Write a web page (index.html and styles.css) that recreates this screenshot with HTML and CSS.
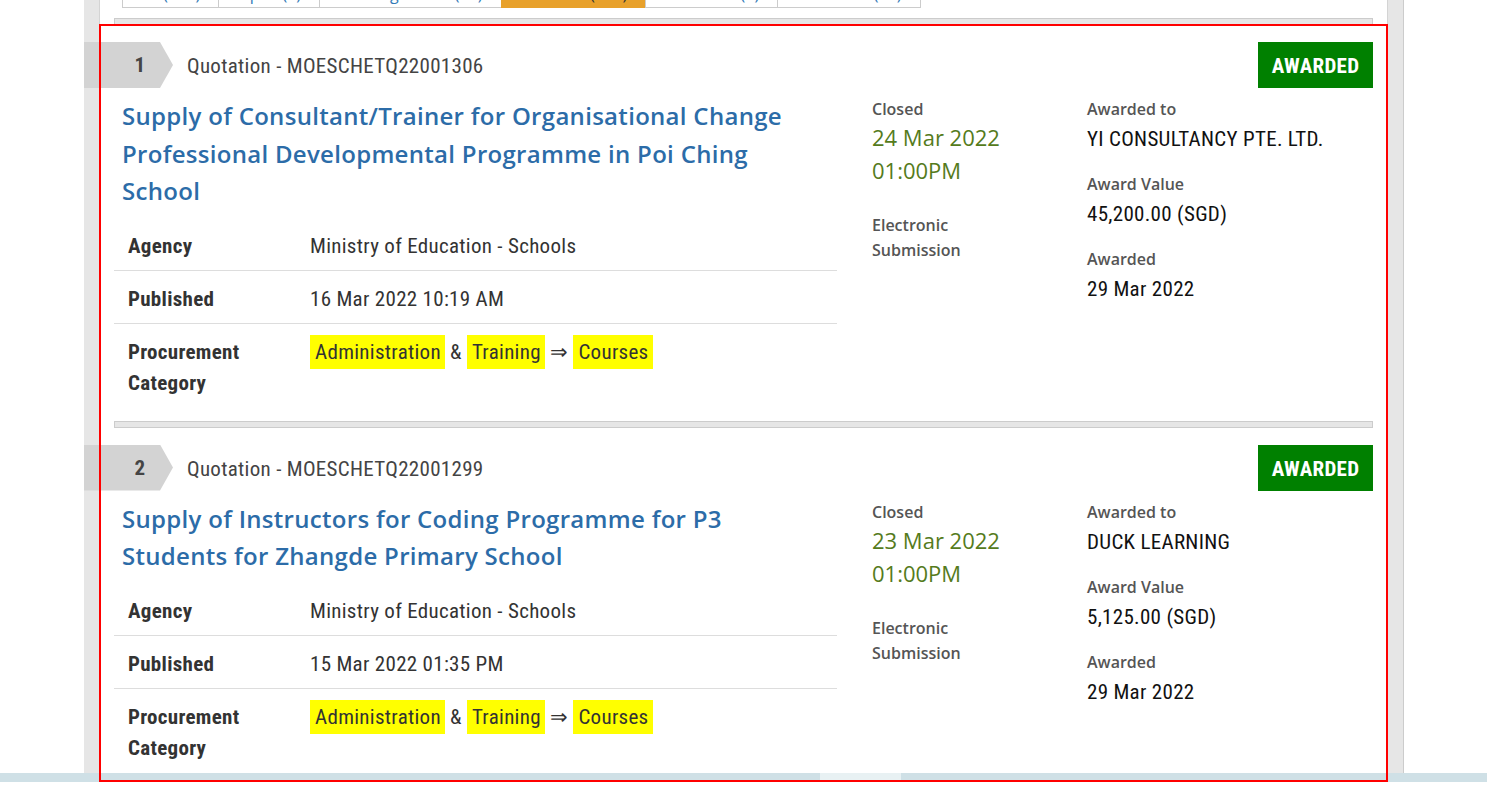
FILE: index.html
```html
<!DOCTYPE html>
<html lang="en">
<head>
<meta charset="utf-8">
<title>Opportunities</title>
<link rel="stylesheet" href="styles.css">
</head>
<body>
<div class="frame">
  <div class="page">
    <div class="panel">
      <ul class="tabs">
        <li class="tab">All (452)</li>
        <li class="tab">Open (7)</li>
        <li class="tab">Pending Award (35)</li>
        <li class="tab tab-active">Awarded (419)</li>
        <li class="tab">Cancelled (5)</li>
        <li class="tab">No Award (26)</li>
      </ul>
      <div class="sep"></div>

      <article class="card">
        <header class="card-head">
          <span class="num">1</span>
          <span class="ref">Quotation - MOESCHETQ22001306</span>
          <span class="status">AWARDED</span>
        </header>
        <div class="card-body">
          <div class="main">
            <a class="title" href="#">Supply of Consultant/Trainer for Organisational Change Professional Developmental Programme in Poi Ching School</a>
            <table class="meta">
              <tr><th>Agency</th><td>Ministry of Education - Schools</td></tr>
              <tr><th>Published</th><td>16 Mar 2022 10:19 AM</td></tr>
              <tr><th>Procurement Category</th><td><span class="hl">Administration</span> &amp; <span class="hl">Training</span> ⇒ <span class="hl">Courses</span></td></tr>
            </table>
          </div>
          <div class="closing">
            <div class="label">Closed</div>
            <div class="date">24 Mar 2022<br>01:00PM</div>
            <div class="mode">Electronic Submission</div>
          </div>
          <div class="award">
            <div class="label">Awarded to</div>
            <div class="value">YI CONSULTANCY PTE. LTD.</div>
            <div class="label">Award Value</div>
            <div class="value">45,200.00 (SGD)</div>
            <div class="label">Awarded</div>
            <div class="value">29 Mar 2022</div>
          </div>
        </div>
      </article>
      <div class="sep"></div>

      <article class="card">
        <header class="card-head">
          <span class="num">2</span>
          <span class="ref">Quotation - MOESCHETQ22001299</span>
          <span class="status">AWARDED</span>
        </header>
        <div class="card-body">
          <div class="main">
            <a class="title" href="#">Supply of Instructors for Coding Programme for P3 Students for Zhangde Primary School</a>
            <table class="meta">
              <tr><th>Agency</th><td>Ministry of Education - Schools</td></tr>
              <tr><th>Published</th><td>15 Mar 2022 01:35 PM</td></tr>
              <tr><th>Procurement Category</th><td><span class="hl">Administration</span> &amp; <span class="hl">Training</span> ⇒ <span class="hl">Courses</span></td></tr>
            </table>
          </div>
          <div class="closing">
            <div class="label">Closed</div>
            <div class="date">23 Mar 2022<br>01:00PM</div>
            <div class="mode">Electronic Submission</div>
          </div>
          <div class="award">
            <div class="label">Awarded to</div>
            <div class="value">DUCK LEARNING</div>
            <div class="label">Award Value</div>
            <div class="value">5,125.00 (SGD)</div>
            <div class="label">Awarded</div>
            <div class="value">29 Mar 2022</div>
          </div>
        </div>
      </article>
      <div class="sep"></div>
    </div>
  </div>
  <div class="hscroll"><span class="thumb"></span></div>
  <div class="focus-box"></div>
</div>
</body>
</html>
```

FILE: styles.css
```css
* { box-sizing: border-box; }
html, body { margin: 0; background: #fff; }
body {
  font-family: "Open Sans", "Noto Sans", sans-serif;
  color: #333;
}

.frame {
  position: relative;
  height: 782px;
  overflow: hidden;
}

.page {
  margin-left: 84px;
  width: 1320px;
  min-height: 100%;
  background: #e6e6e6;
  border-right: 1px solid #ccc;
  padding: 0 15px;
}

.panel {
  background: #fff;
  border-left: 1px solid #d4d4d4;
  border-right: 1px solid #d4d4d4;
  padding: 0 14px;
  min-height: 782px;
}

/* tabs */
.tabs {
  display: flex;
  list-style: none;
  margin: -24px 0 10px 8px;
  padding: 0;
}
.tab {
  padding: 6px 18px 2px;
  font-size: 16px;
  line-height: 22px;
  color: #337ab7;
  border: 1px solid #ccc;
  margin-right: -1px;
  background: #fff;
}
.tab-active {
  background: #e8a12b;
  border-color: #e8a12b;
  color: #333;
}

.sep {
  height: 7px;
  background: #e6e6e6;
  border: 1px solid #ccc;
}

/* card */
.card { padding: 17px 0 14px; }

.card-head {
  display: flex;
  align-items: center;
  height: 46px;
}
.num {
  margin-left: -30px;
  width: 89px;
  height: 46px;
  background: #d3d3d3;
  clip-path: polygon(0 0, 76px 0, 89px 50%, 76px 100%, 0 100%);
  display: flex;
  align-items: center;
  justify-content: flex-end;
  padding-right: 28px;
  font-family: "Roboto Condensed", "Liberation Sans Narrow", Roboto, sans-serif;
  font-weight: 700;
  font-size: 21px;
  color: #444;
}
.ref {
  margin-left: 14px;
  padding-top: 2px;
  font-family: "Roboto Condensed", "Liberation Sans Narrow", Roboto, sans-serif;
  font-size: 21px;
  letter-spacing: 0.3px;
  color: #444;
}
.status {
  margin-left: auto;
  width: 115px;
  height: 46px;
  padding-top: 2px;
  background: #008000;
  color: #fff;
  display: flex;
  align-items: center;
  justify-content: center;
  font-family: "Roboto Condensed", "Liberation Sans Narrow", Roboto, sans-serif;
  font-weight: 700;
  font-size: 21px;
  letter-spacing: 0.3px;
}

.card-body {
  display: grid;
  grid-template-columns: 723px 180px 1fr;
  column-gap: 35px;
  margin-top: 9px;
}

.title {
  display: block;
  padding: 0 30px 0 8px;
  margin-bottom: 8px;
  font-size: 24px;
  font-weight: 600;
  letter-spacing: 0.3px;
  line-height: 37.5px;
  color: #2c6ca8;
  text-decoration: none;
}

.meta {
  width: 100%;
  border-collapse: collapse;
  font-family: "Roboto Condensed", "Liberation Sans Narrow", Roboto, sans-serif;
  font-size: 21px;
  letter-spacing: 0.3px;
  line-height: 31px;
  color: #333;
}
.meta th {
  width: 182px;
  text-align: left;
  vertical-align: top;
  font-weight: 700;
  padding: 13px 14px 8px;
}
.meta td {
  vertical-align: top;
  padding: 13px 14px 8px;
}
.meta tr + tr { border-top: 1px solid #dddddd; }

.hl {
  background: #ffff00;
  padding: 5px 4px 5px 5px;
}

.closing { padding-right: 22px; }

.label {
  font-size: 16px;
  font-weight: 600;
  line-height: 24px;
  color: #555;
}
.date {
  font-size: 22px;
  line-height: 33px;
  color: #557b1c;
  margin-bottom: 26px;
}
.mode {
  font-size: 16px;
  font-weight: 600;
  line-height: 25px;
  color: #555;
}
.value {
  margin: 3px 0 18px;
  font-family: "Roboto Condensed", "Liberation Sans Narrow", Roboto, sans-serif;
  font-size: 21px;
  letter-spacing: 0.3px;
  line-height: 30px;
  color: #111;
}

/* horizontal scrollbar */
.hscroll {
  position: absolute;
  left: 0;
  right: 0;
  bottom: 0;
  height: 9px;
  background: #cfe0e6;
  display: flex;
}
.thumb {
  margin-left: 820px;
  width: 81px;
  background: #e8f1f3;
}

/* highlight rectangle */
.focus-box {
  position: absolute;
  left: 99px;
  top: 24px;
  width: 1289px;
  height: 758px;
  border: 2px solid #ff0000;
  pointer-events: none;
}
```
